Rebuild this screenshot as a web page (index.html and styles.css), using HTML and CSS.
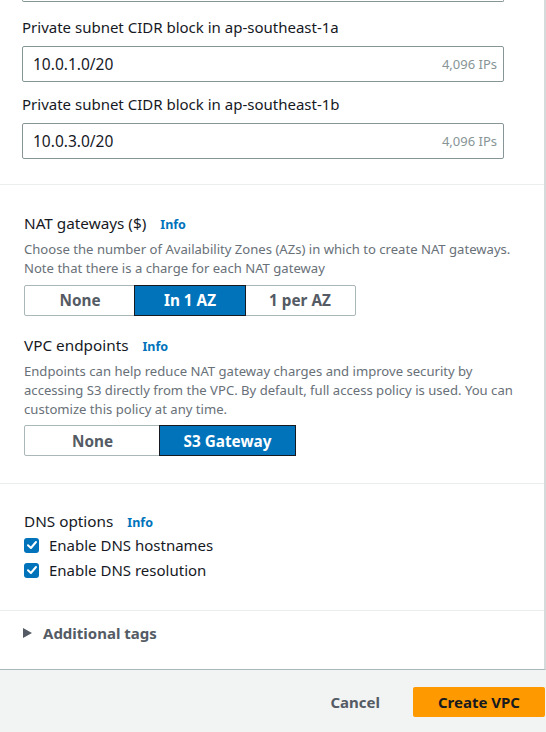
FILE: index.html
```html
<!DOCTYPE html>
<html>
<head>
<meta charset="utf-8">
<link rel="stylesheet" href="styles.css">
</head>
<body>
<div class="panel">
  <section class="section subnets">
    <div class="stub"></div>
    <div class="field">
      <div class="label">Private subnet CIDR block in ap-southeast-1a</div>
      <div class="input"><span class="value">10.0.1.0/20</span><span class="hint">4,096 IPs</span></div>
    </div>
    <div class="field">
      <div class="label">Private subnet CIDR block in ap-southeast-1b</div>
      <div class="input"><span class="value">10.0.3.0/20</span><span class="hint">4,096 IPs</span></div>
    </div>
  </section>

  <section class="section nat">
    <div class="group">
      <div class="heading">NAT gateways ($)<a class="info">Info</a></div>
      <p class="desc">Choose the number of Availability Zones (AZs) in which to create NAT gateways.<br>Note that there is a charge for each NAT gateway</p>
      <div class="segmented seg3">
        <div class="seg">None</div>
        <div class="seg active">In 1 AZ</div>
        <div class="seg">1 per AZ</div>
      </div>
    </div>
    <div class="group">
      <div class="heading">VPC endpoints<a class="info">Info</a></div>
      <p class="desc">Endpoints can help reduce NAT gateway charges and improve security by<br>accessing S3 directly from the VPC. By default, full access policy is used. You can<br>customize this policy at any time.</p>
      <div class="segmented seg2">
        <div class="seg">None</div>
        <div class="seg active">S3 Gateway</div>
      </div>
    </div>
  </section>

  <section class="section dns">
    <div class="heading">DNS options<a class="info">Info</a></div>
    <div class="checks">
      <label class="check"><span class="box"><svg viewBox="0 0 14 14" width="14" height="14"><path d="M3 7.3 L5.9 10 L11 4" fill="none" stroke="#fff" stroke-width="2" stroke-linecap="round" stroke-linejoin="round"/></svg></span>Enable DNS hostnames</label>
      <label class="check"><span class="box"><svg viewBox="0 0 14 14" width="14" height="14"><path d="M3 7.3 L5.9 10 L11 4" fill="none" stroke="#fff" stroke-width="2" stroke-linecap="round" stroke-linejoin="round"/></svg></span>Enable DNS resolution</label>
    </div>
  </section>

  <section class="section tags">
    <div class="expander"><span class="caret"></span>Additional tags</div>
  </section>
</div>
<div class="footer">
  <button class="btn link">Cancel</button>
  <button class="btn primary">Create VPC</button>
</div>
</body>
</html>
```
FILE: styles.css
```css
html, body {
  margin: 0;
  padding: 0;
  background: #f2f3f3;
}
body {
  font-family: "Noto Sans", "Open Sans", sans-serif;
  color: #16191f;
  width: 546px;
}
.panel {
  background: #fff;
  border-right: 2px solid #d5dbdb;
  border-bottom: 1px solid #aab7b8;
  box-sizing: border-box;
  width: 546px;
}
.section {
  border-top: 1px solid #eaeded;
  padding: 28px 24px 0 24px;
}
.subnets {
  border-top: none;
  padding: 0 40px 25px 22px;
}
.stub {
  height: 1px;
  border: 1px solid #879596;
  border-top: none;
  border-radius: 0 0 2px 2px;
  margin-bottom: 15px;
}
.field + .field {
  margin-top: 12px;
}
.label {
  font-size: 15px;
  line-height: 20px;
  margin-bottom: 9px;
}
.input {
  height: 36px;
  box-sizing: border-box;
  border: 1px solid #879596;
  border-radius: 2px;
  display: flex;
  align-items: center;
  justify-content: space-between;
  padding: 0 6px 0 10px;
}
.value {
  font-size: 15.5px;
}
.hint {
  font-size: 13px;
  color: #879596;
}
.heading {
  font-size: 15.3px;
  line-height: 20px;
  height: 20px;
}
.info {
  font-size: 12.5px;
  line-height: 1;
  font-weight: 700;
  color: #0073bb;
  margin-left: 14px;
}
.desc {
  margin: 7px 0 0 0;
  font-size: 13.1px;
  line-height: 18.75px;
  color: #687078;
  white-space: nowrap;
}
.nat .group + .group {
  margin-top: 19.5px;
}
.nat {
  padding-bottom: 27px;
}
.segmented {
  display: flex;
  margin-top: 7px;
  border: 1px solid #aab7b8;
  border-radius: 2px;
  height: 31px;
  box-sizing: border-box;
}
.seg3 { width: 332px; }
.seg2 { width: 272px; }
.seg {
  flex: 1;
  display: flex;
  align-items: center;
  justify-content: center;
  font-size: 15.3px;
  font-weight: 700;
  color: #545b64;
}
.seg.active {
  background: #0073bb;
  color: #fff;
  outline: 1px solid #16191f;
}
.dns {
  padding-top: 27px;
  padding-bottom: 30px;
}
.checks {
  display: flex;
  flex-direction: column;
  gap: 5px;
  margin-top: 4px;
}
.check {
  display: flex;
  align-items: center;
  gap: 10px;
  font-size: 15px;
  line-height: 20px;
}
.box {
  width: 15px;
  height: 15px;
  border-radius: 3px;
  background: #0073bb;
  display: flex;
  align-items: center;
  justify-content: center;
}
.tags {
  padding-top: 12px;
  padding-bottom: 26px;
  padding-left: 23px;
}
.expander {
  display: flex;
  align-items: center;
  gap: 11px;
  font-size: 15px;
  line-height: 20px;
  font-weight: 700;
  color: #545b64;
}
.caret {
  width: 0;
  height: 0;
  border-top: 5px solid transparent;
  border-bottom: 5px solid transparent;
  border-left: 9px solid #545b64;
}
.footer {
  display: flex;
  justify-content: flex-end;
  align-items: center;
  gap: 33px;
  padding: 17px 1px 0 0;
}
.btn {
  font-family: inherit;
  font-size: 15px;
  font-weight: 700;
  border: none;
  background: none;
  height: 30px;
  padding: 0;
  cursor: pointer;
}
.link {
  color: #545b64;
}
.primary {
  width: 132px;
  background: #ff9900;
  color: #16191f;
  border-radius: 2px;
}
```
